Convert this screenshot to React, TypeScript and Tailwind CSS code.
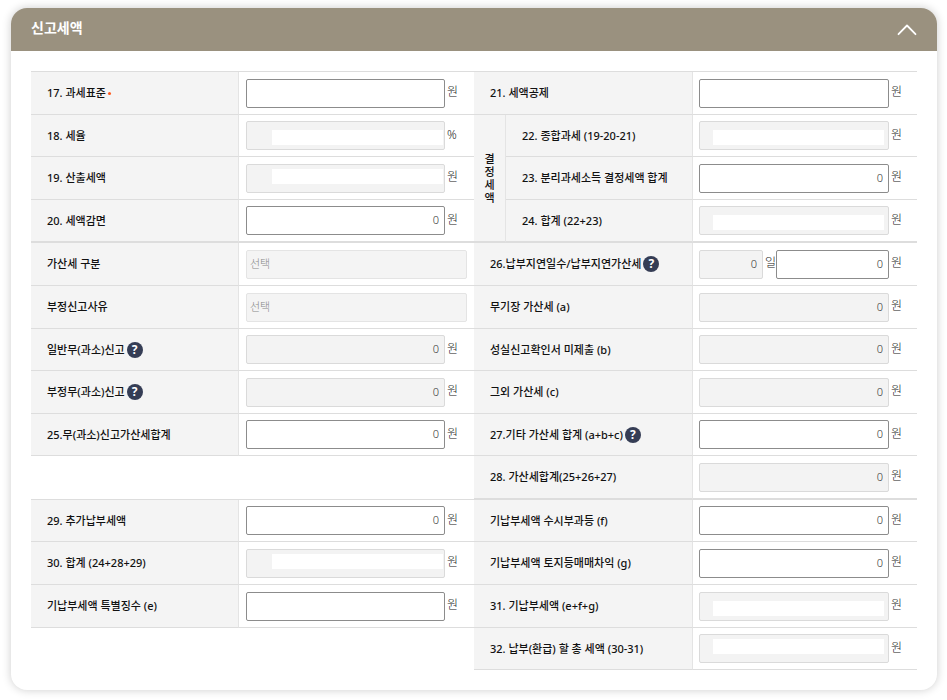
import { useState, type ReactNode } from 'react'
import clsx from 'clsx'

type FieldProps = {
  id: string
  value?: string
  unit?: string
  disabled?: boolean
  mask?: string
}

function HelpButton({ label }: { label: string }) {
  return (
    <button
      type="button"
      aria-label={`${label} 도움말`}
      className="flex size-4 shrink-0 items-center justify-center rounded-full bg-[#353d55] text-xs leading-4 font-bold text-white"
    >
      ?
    </button>
  )
}

function AmountInput({ id, value = '', disabled, label }: { id: string; value?: string; disabled?: boolean; label?: string }) {
  return (
    <input
      id={id}
      type="text"
      inputMode="numeric"
      defaultValue={value}
      disabled={disabled}
      aria-label={label}
      className={clsx(
        'block h-[29px] w-full min-w-0 rounded-xs border px-[5px] pb-0.5 text-right text-[11px] font-light text-[#333]',
        disabled ? 'border-[#dadada] bg-[#f3f3f3]' : 'border-[#8c8c8c] bg-white'
      )}
    />
  )
}

function Unit({ children }: { children: ReactNode }) {
  return <span className="w-5 shrink-0 pb-0.5 text-xs leading-4 font-light text-[#222]">{children}</span>
}

function Field({ id, value, unit = '원', disabled, mask }: FieldProps) {
  return (
    <div className="flex items-center gap-0.5">
      <div className="relative min-w-0 flex-1">
        <AmountInput id={id} value={value} disabled={disabled} />
        {mask && <span className={clsx('absolute h-[15px] w-[171px] bg-white', mask)} />}
      </div>
      <Unit>{unit}</Unit>
    </div>
  )
}

function SelectField({ id }: { id: string }) {
  return (
    <select
      id={id}
      disabled
      className="block h-[29px] w-full appearance-none rounded-xs border border-[#e4e4e4] bg-[#f4f4f4] px-[3px] text-[11px] font-light text-[#888] opacity-100"
    >
      <option>선택</option>
    </select>
  )
}

type HeadProps = {
  id: string
  children: string
  colSpan?: number
  required?: boolean
  help?: boolean
  thick?: boolean
}

function Head({ id, children, colSpan, required, help, thick }: HeadProps) {
  return (
    <th
      scope="row"
      colSpan={colSpan}
      className={clsx(
        'border-r border-[#ddd] border-r-[#e4e4e4] bg-[#f4f4f4] pl-4 text-left font-medium',
        thick ? 'border-b-2' : 'border-b'
      )}
    >
      <div className="flex items-center gap-0.5 whitespace-nowrap">
        <label htmlFor={id}>{children}</label>
        {required && <span className="size-[3px] rounded-full bg-[#ff5a1f]" />}
        {help && <HelpButton label={children} />}
      </div>
    </th>
  )
}

function Cell({ children, right, thick }: { children: ReactNode; right?: boolean; thick?: boolean }) {
  return (
    <td className={clsx('border-[#ddd]', right ? 'px-1.5' : 'px-[7px]', thick ? 'border-b-2' : 'border-b')}>
      {children}
    </td>
  )
}

function TaxTable() {
  return (
    <table className="w-full table-fixed border-separate border-spacing-0 border-t border-[#ddd] text-[11px] leading-4 text-[#111]">
      <colgroup>
        <col className="w-[208px]" />
        <col className="w-[235px]" />
        <col className="w-[32px]" />
        <col className="w-[187px]" />
        <col className="w-[224px]" />
      </colgroup>
      <tbody>
        <tr className="h-[43px]">
          <Head id="f17" required>17. 과세표준</Head>
          <Cell><Field id="f17" /></Cell>
          <Head id="f21" colSpan={2}>21. 세액공제</Head>
          <Cell right><Field id="f21" /></Cell>
        </tr>
        <tr className="h-[42px]">
          <Head id="f18">18. 세율</Head>
          <Cell><Field id="f18" unit="%" disabled mask="top-[9px] right-[2px]" /></Cell>
          <th
            scope="rowgroup"
            rowSpan={3}
            className="border-r border-b-2 border-[#ddd] border-r-[#e4e4e4] bg-[#f4f4f4] px-[10px] text-center leading-[13px] font-medium break-all"
          >
            결정세액
          </th>
          <Head id="f22">22. 종합과세 (19-20-21)</Head>
          <Cell right><Field id="f22" disabled mask="top-[9px] right-[5px]" /></Cell>
        </tr>
        <tr className="h-[43px]">
          <Head id="f19">19. 산출세액</Head>
          <Cell><Field id="f19" disabled mask="top-[5px] right-[2px]" /></Cell>
          <Head id="f23">23. 분리과세소득 결정세액 합계</Head>
          <Cell right><Field id="f23" value="0" /></Cell>
        </tr>
        <tr className="h-[43px]">
          <Head id="f20" thick>20. 세액감면</Head>
          <Cell thick><Field id="f20" value="0" /></Cell>
          <Head id="f24" thick>24. 합계 (22+23)</Head>
          <Cell right thick><Field id="f24" disabled mask="top-[9px] right-[5px]" /></Cell>
        </tr>
        <tr className="h-[43px]">
          <Head id="penaltyType">가산세 구분</Head>
          <Cell><SelectField id="penaltyType" /></Cell>
          <Head id="f26" colSpan={2} help>26.납부지연일수/납부지연가산세</Head>
          <Cell right>
            <div className="flex items-center gap-0.5">
              <div className="w-16 shrink-0">
                <AmountInput id="f26days" value="0" disabled label="납부지연일수" />
              </div>
              <div className="flex min-w-0 flex-1 items-center">
                <span className="w-[11px] shrink-0 pb-0.5 text-xs leading-4 font-light text-[#222]">일</span>
                <AmountInput id="f26" value="0" />
              </div>
              <Unit>원</Unit>
            </div>
          </Cell>
        </tr>
        <tr className="h-[43px]">
          <Head id="fraudReason">부정신고사유</Head>
          <Cell><SelectField id="fraudReason" /></Cell>
          <Head id="fa" colSpan={2}>무기장 가산세 (a)</Head>
          <Cell right><Field id="fa" value="0" disabled /></Cell>
        </tr>
        <tr className="h-[42px]">
          <Head id="general" help>일반무(과소)신고</Head>
          <Cell><Field id="general" value="0" disabled /></Cell>
          <Head id="fb" colSpan={2}>성실신고확인서 미제출 (b)</Head>
          <Cell right><Field id="fb" value="0" disabled /></Cell>
        </tr>
        <tr className="h-[43px]">
          <Head id="fraud" help>부정무(과소)신고</Head>
          <Cell><Field id="fraud" value="0" disabled /></Cell>
          <Head id="fc" colSpan={2}>그외 가산세 (c)</Head>
          <Cell right><Field id="fc" value="0" disabled /></Cell>
        </tr>
        <tr className="h-[42px]">
          <Head id="f25">25.무(과소)신고가산세합계</Head>
          <Cell><Field id="f25" value="0" /></Cell>
          <Head id="f27" colSpan={2} help>27.기타 가산세 합계 (a+b+c)</Head>
          <Cell right><Field id="f27" value="0" /></Cell>
        </tr>
        <tr className="h-[44px]">
          <td colSpan={2} className="border-b border-[#ddd]" />
          <Head id="f28" colSpan={2} thick>28. 가산세합계(25+26+27)</Head>
          <Cell right thick><Field id="f28" value="0" disabled /></Cell>
        </tr>
        <tr className="h-[42px]">
          <Head id="f29">29. 추가납부세액</Head>
          <Cell><Field id="f29" value="0" /></Cell>
          <Head id="ff" colSpan={2}>기납부세액 수시부과등 (f)</Head>
          <Cell right><Field id="ff" value="0" /></Cell>
        </tr>
        <tr className="h-[43px]">
          <Head id="f30">30. 합계 (24+28+29)</Head>
          <Cell><Field id="f30" disabled mask="top-[5px] right-[2px]" /></Cell>
          <Head id="fg" colSpan={2}>기납부세액 토지등매매차익 (g)</Head>
          <Cell right><Field id="fg" value="0" /></Cell>
        </tr>
        <tr className="h-[43px]">
          <Head id="fe">기납부세액 특별징수 (e)</Head>
          <Cell><Field id="fe" /></Cell>
          <Head id="f31" colSpan={2}>31. 기납부세액 (e+f+g)</Head>
          <Cell right><Field id="f31" disabled mask="top-[9px] right-[5px]" /></Cell>
        </tr>
        <tr className="h-[42px]">
          <td colSpan={2} />
          <Head id="f32" colSpan={2}>32. 납부(환급) 할 총 세액 (30-31)</Head>
          <Cell right><Field id="f32" disabled mask="top-[5px] right-[5px]" /></Cell>
        </tr>
      </tbody>
    </table>
  )
}

export default function App() {
  const [open, setOpen] = useState(true)

  return (
    <main className="bg-white pt-2 pr-[10px] pb-[10px] pl-[11px] font-['Noto_Sans','Noto_Sans_CJK_KR',sans-serif]">
      <section className="overflow-hidden rounded-2xl bg-white shadow-[0_0_10px_rgba(0,0,0,0.2)]">
        <header className="flex h-[43px] items-center justify-between bg-[#9a917f] px-5 text-white">
          <h2 className="pb-1 text-sm leading-5 font-bold">신고세액</h2>
          <button type="button" aria-label="접기/펼치기" aria-expanded={open} onClick={() => setOpen(!open)}>
            <svg
              width="20"
              height="12"
              viewBox="0 0 20 12"
              fill="none"
              stroke="currentColor"
              strokeWidth="1.8"
              strokeLinecap="round"
              strokeLinejoin="round"
              className={open ? '' : 'rotate-180'}
            >
              <path d="M1.5 10.2 10 1.500l8.500 8.700" />
            </svg>
          </button>
        </header>
        {open && (
          <div className="p-5">
            <TaxTable />
          </div>
        )}
      </section>
    </main>
  )
}
